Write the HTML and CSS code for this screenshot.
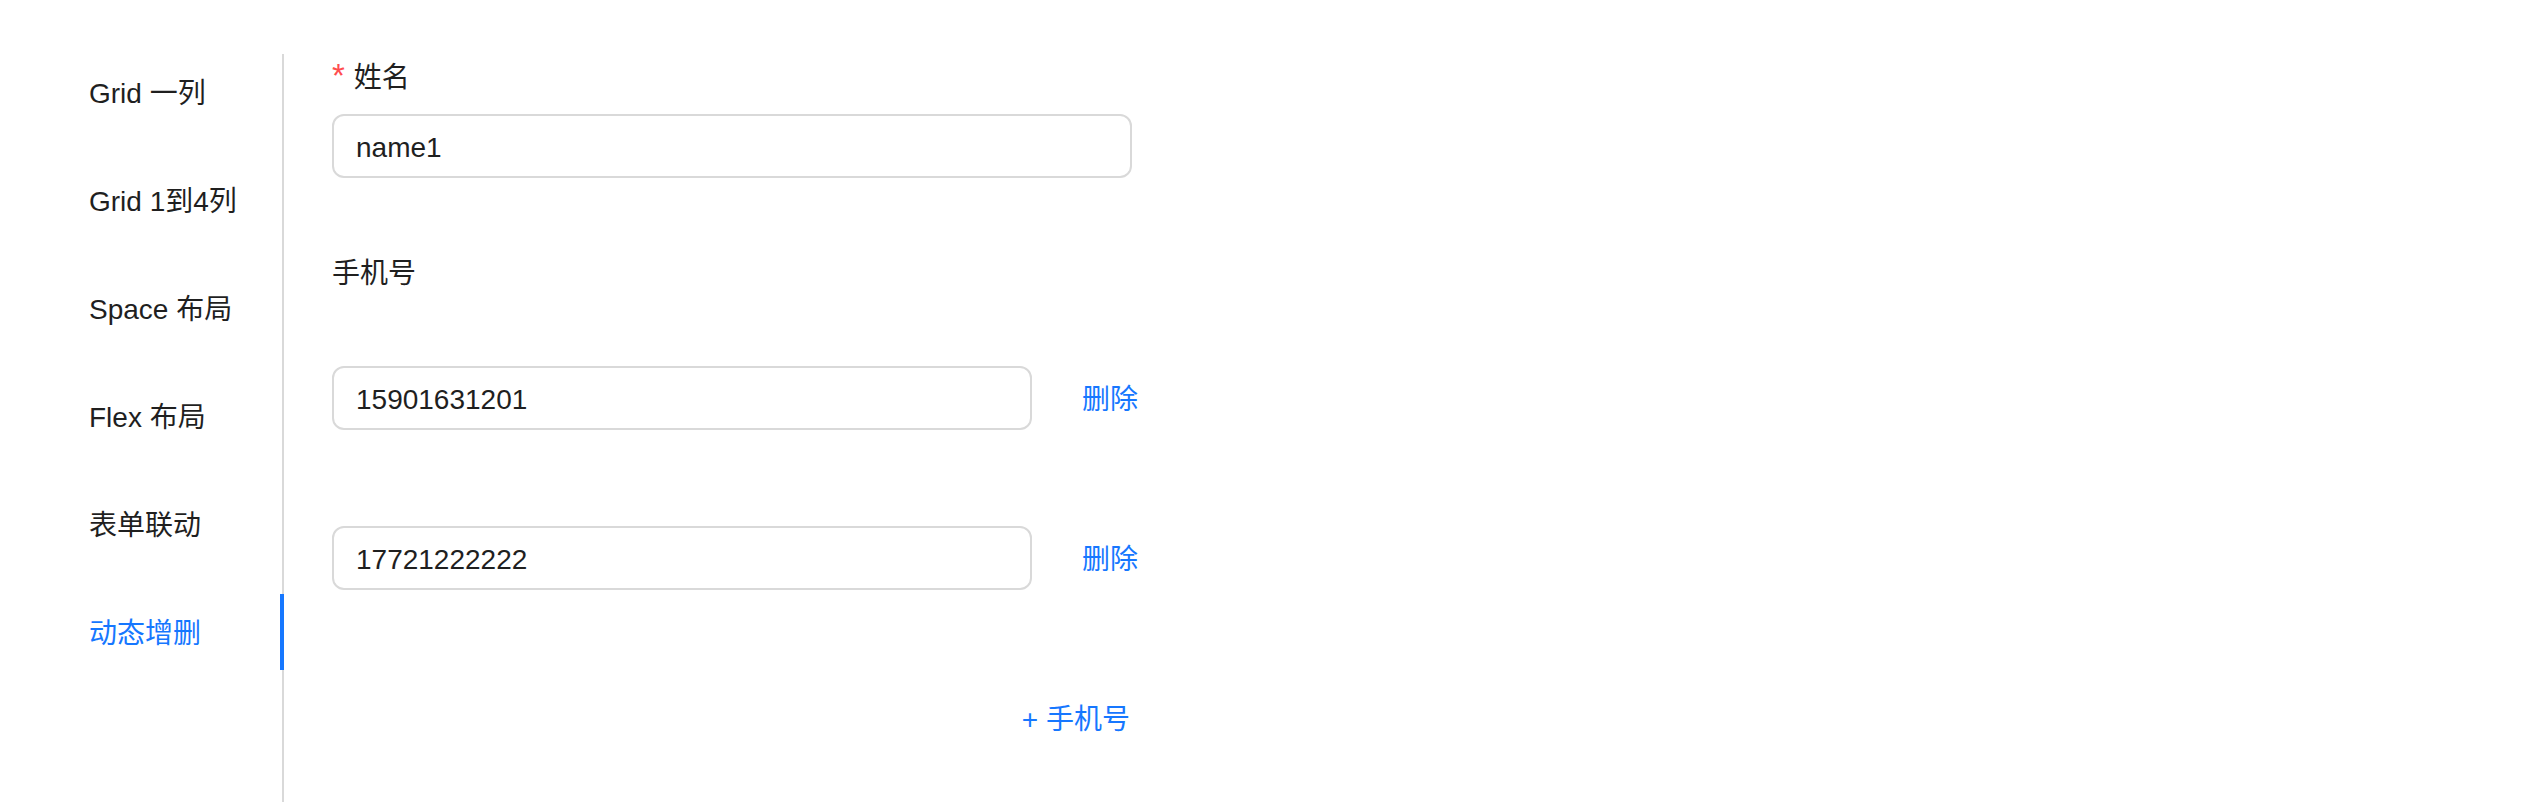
FILE: index.html
```html
<!DOCTYPE html>
<html lang="zh-CN">
<head>
<meta charset="utf-8">
<title>动态增删</title>
<link rel="stylesheet" href="styles.css">
</head>
<body>
<div class="tabs">
  <nav class="tab-nav">
    <div class="tab">Grid 一列</div>
    <div class="tab">Grid 1到4列</div>
    <div class="tab">Space 布局</div>
    <div class="tab">Flex 布局</div>
    <div class="tab">表单联动</div>
    <div class="tab tab-active">动态增删<span class="ink"></span></div>
  </nav>
  <main class="content">
    <div class="form-item">
      <div class="label"><span class="required">*</span>姓名</div>
      <div class="input input-wide">name1</div>
    </div>
    <div class="list">
      <div class="label list-label">手机号</div>
      <div class="phone-row">
        <div class="input input-phone">15901631201</div>
        <span class="link">删除</span>
      </div>
      <div class="phone-row">
        <div class="input input-phone">17721222222</div>
        <span class="link">删除</span>
      </div>
      <div class="add-row">
        <span class="link add">+ 手机号</span>
      </div>
    </div>
  </main>
</div>
</body>
</html>
```

FILE: styles.css
```css
html, body {
  margin: 0;
  padding: 0;
  background: #ffffff;
}

body {
  font-family: "Liberation Sans", "Noto Sans CJK SC", sans-serif;
  font-size: 28px;
  color: #1f1f1f;
}

.tabs {
  display: flex;
  min-height: 100vh;
  box-sizing: border-box;
  padding: 54px 0 0 41px;
}

.tab-nav {
  width: 241px;
  border-right: 2px solid #d9d9d9;
  display: flex;
  flex-direction: column;
  gap: 32px;
}

.tab {
  position: relative;
  padding: 18px 0 14px 48px;
  line-height: 44px;
  white-space: nowrap;
}

.tab-active {
  color: #1677ff;
}

.ink {
  position: absolute;
  top: 0;
  bottom: 0;
  right: -2px;
  width: 4px;
  background: #1677ff;
}

.content {
  padding-left: 48px;
  display: flex;
  flex-direction: column;
}

.label {
  height: 44px;
  line-height: 44px;
  padding: 2px 0 14px;
}

.required {
  color: #ff4d4f;
  font-size: 33px;
  line-height: 1;
  margin-right: 9px;
}

.input {
  box-sizing: border-box;
  height: 64px;
  border: 2px solid #d9d9d9;
  border-radius: 12px;
  padding: 4px 22px 0;
  display: flex;
  align-items: center;
  line-height: 44px;
}

.input-wide {
  width: 800px;
}

.input-phone {
  width: 700px;
}

.list {
  margin-top: 72px;
  display: flex;
  flex-direction: column;
}

.list-label {
  padding-bottom: 0;
  margin-bottom: 70px;
}

.phone-row {
  display: flex;
  align-items: center;
  margin-bottom: 96px;
}

.link {
  color: #1677ff;
  line-height: 44px;
  padding-top: 4px;
  margin-left: 50px;
}

.add-row {
  width: 800px;
  height: 64px;
  box-sizing: border-box;
  padding-right: 2px;
  display: flex;
  align-items: center;
  justify-content: flex-end;
}

.add {
  margin-left: 0;
}
```
